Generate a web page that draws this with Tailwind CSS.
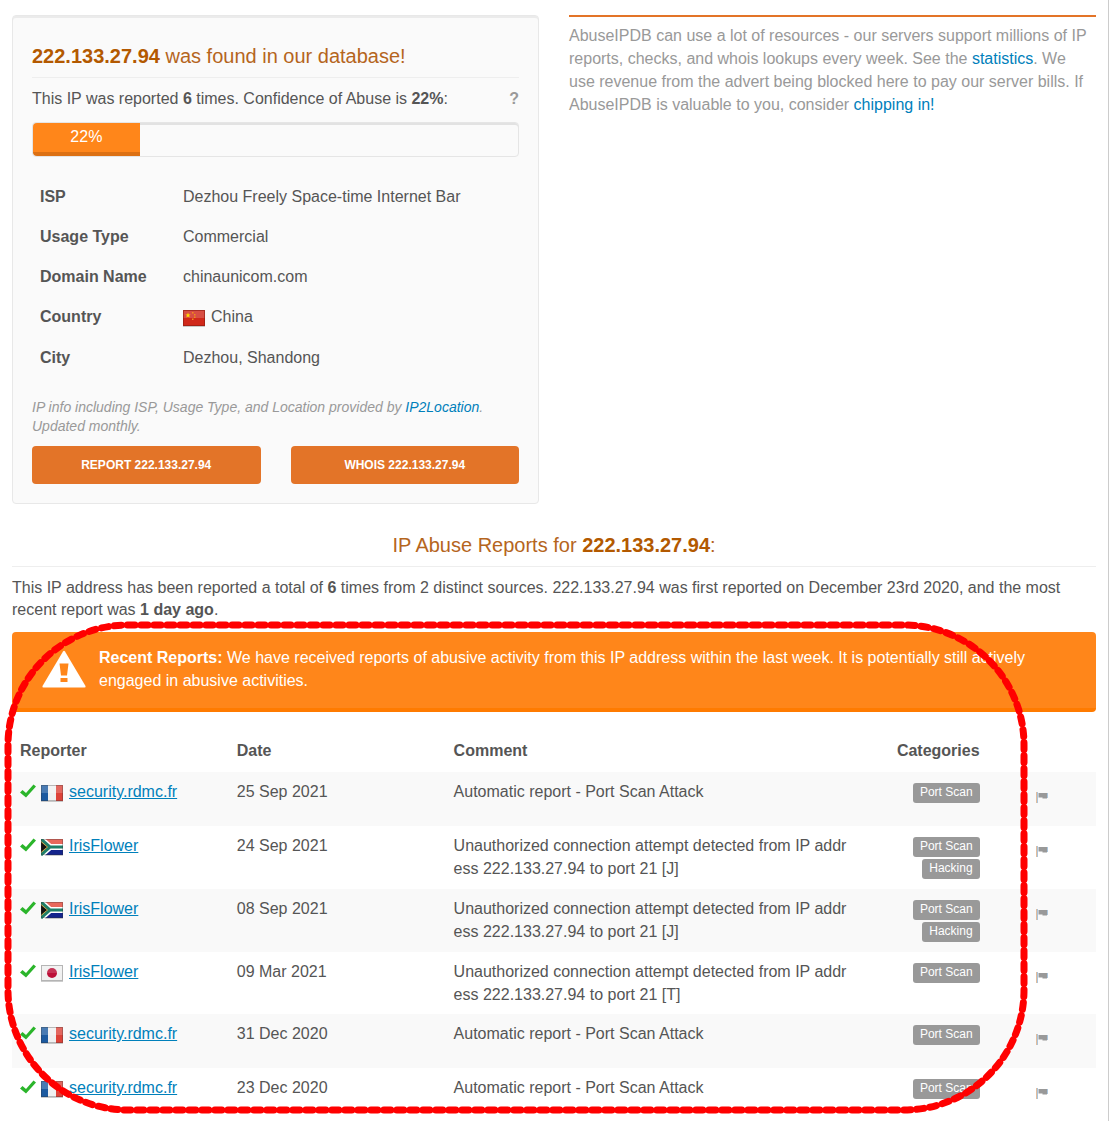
<!DOCTYPE html>
<html lang="en">
<head>
    <meta charset="utf-8">
    <meta name="viewport" content="width=device-width, initial-scale=1">
    <title>222.133.27.94 | AbuseIPDB</title>
    <script src="https://cdn.jsdelivr.net/npm/@tailwindcss/browser@4"></script>
</head>
<body class="bg-white font-['Liberation_Sans',Arial,sans-serif] text-base text-[#555] overflow-hidden">

    <!-- Icons -->
    <svg class="hidden">
        <defs>
            <linearGradient id="shine" x1="0" y1="0" x2="0" y2="1">
                <stop offset="0" stop-color="#fff" stop-opacity=".35"/>
                <stop offset=".5" stop-color="#fff" stop-opacity=".12"/>
                <stop offset="1" stop-color="#000" stop-opacity=".08"/>
            </linearGradient>
        </defs>
        <symbol id="flag-cn" viewBox="0 0 22 17">
            <rect y="1" width="22" height="16" fill="#000" opacity=".2"/>
            <rect width="22" height="16" fill="#d0281a"/>
            <path d="M0 0h22v8H0z" fill="#fff" opacity=".18"/>
            <path d="M5 2.400l.7 2h2L6.100 5.600l.6 2L5 6.400 3.300 7.600l.6-2L2.300 4.400h2z" fill="#ffde00"/>
            <path d="M9 2h1.500v1.500H9zM11 4h1.500v1.500H11zM11 6.500h1.500V8H11zM9 8.500h1.500V10H9z" fill="#f0901c"/>
            <rect x=".5" y=".5" width="21" height="15" fill="none" stroke="#8a1a10" stroke-opacity=".6"/>
        </symbol>
        <symbol id="flag-fr" viewBox="0 0 22 17">
            <rect y="1" width="22" height="16" fill="#000" opacity=".2"/>
            <rect width="7" height="16" fill="#1c5aa0"/>
            <rect x="7" width="8" height="16" fill="#f0f0f0"/>
            <rect x="15" width="7" height="16" fill="#dd4238"/>
            <path d="M0 0h22v8H0z" fill="#fff" opacity=".2"/>
            <rect x=".5" y=".5" width="21" height="15" fill="none" stroke="#333" stroke-opacity=".3"/>
        </symbol>
        <symbol id="flag-za" viewBox="0 0 22 17">
            <rect y="1" width="22" height="16" fill="#000" opacity=".2"/>
            <rect width="22" height="8" fill="#e8685c"/>
            <rect y="8" width="22" height="8" fill="#14248c"/>
            <path d="M0 0l9 8-9 8M9 8h13" fill="none" stroke="#fff" stroke-width="6"/>
            <path d="M0 2l7 6-7 6z" fill="#111"/>
            <path d="M0 2l7 6-7 6" fill="none" stroke="#f0b84a" stroke-width="1.500"/>
            <path d="M0 0l9 8-9 8M9 8h13" fill="none" stroke="#1f7f68" stroke-width="3"/>
            <rect x=".5" y=".5" width="21" height="15" fill="none" stroke="#333" stroke-opacity=".3"/>
        </symbol>
        <symbol id="flag-jp" viewBox="0 0 22 17">
            <rect y="1" width="22" height="16" fill="#000" opacity=".2"/>
            <rect width="22" height="16" fill="#f0f0f0"/>
            <circle cx="11" cy="8" r="5" fill="#bc1038"/>
            <path d="M0 0h22v8H0z" fill="#fff" opacity=".15"/>
            <rect x=".5" y=".5" width="21" height="15" fill="none" stroke="#777" stroke-opacity=".5"/>
        </symbol>
        <symbol id="check" viewBox="0 0 16 14">
            <path d="M0 8.500L2.500 6 6 9 13.500.500 16 2.500 6 13.500z" fill="#2bb52b"/>
        </symbol>
        <symbol id="report-flag" viewBox="0 0 12 12">
            <path d="M0 1h1v11H0z" fill="#e3bd9c"/>
            <path d="M1 1h1v11H1z" fill="#a9c4dc"/>
            <path d="M2.500 2h8.500v5.500H6.500V6.500h-4z" fill="#999"/>
            <path d="M11 2h1v5h-1z" fill="#a9c4dc"/>
        </symbol>
    </svg>

    <div class="mr-px border-r border-[#ccc] min-h-screen px-3 pt-[15px]">

        <div class="grid grid-cols-2 gap-x-[30px] items-start">
            <div class="border border-[#e8e8e8] rounded bg-[#fafafa] shadow-[inset_0_2px_0_#ebebeb] px-[19px] pt-7 pb-[19px]">
                <h3 class="text-xl leading-6 text-[#b5651d] border-b border-[#eee] pb-[9px]"><b class="text-[#b35900]">222.133.27.94</b> was found in our database!</h3>
                <p class="flex justify-between leading-6 mt-[9px]">
                    <span>This IP was reported <b>6</b> times. Confidence of Abuse is <b>22%</b>:</span>
                    <b class="text-[#999]">?</b>
                </p>
                <div class="mt-[11px] h-[35px] border border-[#e5e5e5] rounded shadow-[inset_0_2px_0_#e2e2e2]">
                    <div class="h-full rounded-l-sm bg-[#ff861a] border-b-4 border-[#dc7013] text-white text-center leading-7" style="width: 22%">22%</div>
                </div>

                <table class="mt-5 w-full text-left">
                    <tr class="h-10"><th class="w-[143px] px-2">ISP</th><td class="px-2">Dezhou Freely Space-time Internet Bar</td></tr>
                    <tr class="h-10"><th class="px-2">Usage Type</th><td class="px-2">Commercial</td></tr>
                    <tr class="h-10"><th class="px-2">Domain Name</th><td class="px-2">chinaunicom.com</td></tr>
                    <tr class="h-10">
                        <th class="px-2">Country</th>
                        <td class="px-2">
                            <div class="flex items-center gap-[6px]"><svg class="w-[22px] h-[17px] mt-[2px]"><use href="#flag-cn"/></svg>China</div>
                        </td>
                    </tr>
                    <tr class="h-[41px]"><th class="px-2">City</th><td class="px-2">Dezhou, Shandong</td></tr>
                </table>

                <p class="mt-5 text-sm leading-[19px] italic text-[#999]">IP info including ISP, Usage Type, and Location provided by <a href="#" class="text-[#0080bb]">IP2Location</a>.<br>Updated monthly.</p>

                <div class="mt-[10px] grid grid-cols-2 gap-[30px]">
                    <button class="h-[38px] rounded bg-[#e37428] text-white text-xs font-bold uppercase">Report 222.133.27.94</button>
                    <button class="h-[38px] rounded bg-[#e37428] text-white text-xs font-bold uppercase">Whois 222.133.27.94</button>
                </div>
            </div>

            <p class="border-t-2 border-[#e37428] pt-[7px] leading-[23px] text-[#999]">
                AbuseIPDB can use a lot of resources - our servers support millions of IP reports, checks, and whois lookups every week. See the <a href="#" class="text-[#0080bb]">statistics</a>. We use revenue from the advert being blocked here to pay our server bills. If AbuseIPDB is valuable to you, consider <a href="#" class="text-[#0080bb]">chipping in!</a>
            </p>
        </div>

        <h3 class="mt-[29px] text-xl leading-6 text-center text-[#b5651d] border-b border-[#eee] pb-[9px]">IP Abuse Reports for <b class="text-[#b35900]">222.133.27.94</b>:</h3>
        <p class="mt-[10px] leading-[22px]">This IP address has been reported a total of <b>6</b> times from 2 distinct sources. 222.133.27.94 was first reported on December 23rd 2020, and the most recent report was <b>1 day ago</b>.</p>

        <div class="relative mt-[11px]">
            <div class="flex h-20 rounded bg-[#ff861a] border-b-4 border-[#ff7b00] pt-[14px] px-[30px] text-white">
                <svg class="shrink-0 w-11 h-[38px] mt-1 mr-[13px]" viewBox="0 0 44 38">
                    <path d="M21 1.500Q22 0 23 1.500L43.500 36q.5 1.500-1 1.500h-41q-1.500 0-1-1.500z" fill="#fff"/>
                    <path d="M17.500 13.500h9l-1.500 12h-6zM18.500 28h7v4h-7z" fill="#ff861a"/>
                </svg>
                <p class="leading-[23px]"><b>Recent Reports:</b> We have received reports of abusive activity from this IP address within the last week. It is potentially still actively engaged in abusive activities.</p>
            </div>

            <table class="mt-4 w-full table-fixed text-left">
                <thead>
                    <tr class="h-11">
                        <th class="w-1/5 px-2 pt-[2px]">Reporter</th>
                        <th class="w-1/5 px-2 pt-[2px]">Date</th>
                        <th class="w-2/5 px-2 pt-[2px]">Comment</th>
                        <th class="w-1/10 px-2 pt-[2px] text-right">Categories</th>
                        <th class="w-1/10"></th>
                    </tr>
                </thead>
                <tbody class="align-top leading-[23px]">
                    <tr class="h-[54px] bg-[#f9f9f9]">
                        <td class="px-2 pt-2"><div class="flex"><svg class="w-4 h-[14px] mt-1 mr-[5px]"><use href="#check"/></svg><svg class="w-[22px] h-[17px] mt-[5px] mr-[6px]"><use href="#flag-fr"/></svg><a href="#" class="text-[#0080bb] underline">security.rdmc.fr</a></div></td>
                        <td class="px-2 pt-2">25 Sep 2021</td>
                        <td class="pl-2 pr-8 pt-2 break-all">Automatic report - Port Scan Attack</td>
                        <td class="px-2 pt-[11px]"><div class="flex flex-col items-end gap-[2px]"><span class="h-5 rounded-[3px] bg-[#999] px-[7px] text-xs leading-[18px] text-white">Port Scan</span></div></td>
                        <td class="pt-[19px]"><button aria-label="Report" class="block mx-auto"><svg class="w-3 h-3"><use href="#report-flag"/></svg></button></td>
                    </tr>
                    <tr class="h-[63px]">
                        <td class="px-2 pt-2"><div class="flex"><svg class="w-4 h-[14px] mt-1 mr-[5px]"><use href="#check"/></svg><svg class="w-[22px] h-[17px] mt-[5px] mr-[6px]"><use href="#flag-za"/></svg><a href="#" class="text-[#0080bb] underline">IrisFlower</a></div></td>
                        <td class="px-2 pt-2">24 Sep 2021</td>
                        <td class="pl-2 pr-8 pt-2 break-all">Unauthorized connection attempt detected from IP address 222.133.27.94 to port 21 [J]</td>
                        <td class="px-2 pt-[11px]"><div class="flex flex-col items-end gap-[2px]"><span class="h-5 rounded-[3px] bg-[#999] px-[7px] text-xs leading-[18px] text-white">Port Scan</span><span class="h-5 rounded-[3px] bg-[#999] px-[7px] text-xs leading-[18px] text-white">Hacking</span></div></td>
                        <td class="pt-[19px]"><button aria-label="Report" class="block mx-auto"><svg class="w-3 h-3"><use href="#report-flag"/></svg></button></td>
                    </tr>
                    <tr class="h-[63px] bg-[#f9f9f9]">
                        <td class="px-2 pt-2"><div class="flex"><svg class="w-4 h-[14px] mt-1 mr-[5px]"><use href="#check"/></svg><svg class="w-[22px] h-[17px] mt-[5px] mr-[6px]"><use href="#flag-za"/></svg><a href="#" class="text-[#0080bb] underline">IrisFlower</a></div></td>
                        <td class="px-2 pt-2">08 Sep 2021</td>
                        <td class="pl-2 pr-8 pt-2 break-all">Unauthorized connection attempt detected from IP address 222.133.27.94 to port 21 [J]</td>
                        <td class="px-2 pt-[11px]"><div class="flex flex-col items-end gap-[2px]"><span class="h-5 rounded-[3px] bg-[#999] px-[7px] text-xs leading-[18px] text-white">Port Scan</span><span class="h-5 rounded-[3px] bg-[#999] px-[7px] text-xs leading-[18px] text-white">Hacking</span></div></td>
                        <td class="pt-[19px]"><button aria-label="Report" class="block mx-auto"><svg class="w-3 h-3"><use href="#report-flag"/></svg></button></td>
                    </tr>
                    <tr class="h-[62px]">
                        <td class="px-2 pt-2"><div class="flex"><svg class="w-4 h-[14px] mt-1 mr-[5px]"><use href="#check"/></svg><svg class="w-[22px] h-[17px] mt-[5px] mr-[6px]"><use href="#flag-jp"/></svg><a href="#" class="text-[#0080bb] underline">IrisFlower</a></div></td>
                        <td class="px-2 pt-2">09 Mar 2021</td>
                        <td class="pl-2 pr-8 pt-2 break-all">Unauthorized connection attempt detected from IP address 222.133.27.94 to port 21 [T]</td>
                        <td class="px-2 pt-[11px]"><div class="flex flex-col items-end gap-[2px]"><span class="h-5 rounded-[3px] bg-[#999] px-[7px] text-xs leading-[18px] text-white">Port Scan</span></div></td>
                        <td class="pt-[19px]"><button aria-label="Report" class="block mx-auto"><svg class="w-3 h-3"><use href="#report-flag"/></svg></button></td>
                    </tr>
                    <tr class="h-[54px] bg-[#f9f9f9]">
                        <td class="px-2 pt-2"><div class="flex"><svg class="w-4 h-[14px] mt-1 mr-[5px]"><use href="#check"/></svg><svg class="w-[22px] h-[17px] mt-[5px] mr-[6px]"><use href="#flag-fr"/></svg><a href="#" class="text-[#0080bb] underline">security.rdmc.fr</a></div></td>
                        <td class="px-2 pt-2">31 Dec 2020</td>
                        <td class="pl-2 pr-8 pt-2 break-all">Automatic report - Port Scan Attack</td>
                        <td class="px-2 pt-[11px]"><div class="flex flex-col items-end gap-[2px]"><span class="h-5 rounded-[3px] bg-[#999] px-[7px] text-xs leading-[18px] text-white">Port Scan</span></div></td>
                        <td class="pt-[19px]"><button aria-label="Report" class="block mx-auto"><svg class="w-3 h-3"><use href="#report-flag"/></svg></button></td>
                    </tr>
                    <tr class="h-[54px]">
                        <td class="px-2 pt-2"><div class="flex"><svg class="w-4 h-[14px] mt-1 mr-[5px]"><use href="#check"/></svg><svg class="w-[22px] h-[17px] mt-[5px] mr-[6px]"><use href="#flag-fr"/></svg><a href="#" class="text-[#0080bb] underline">security.rdmc.fr</a></div></td>
                        <td class="px-2 pt-2">23 Dec 2020</td>
                        <td class="pl-2 pr-8 pt-2 break-all">Automatic report - Port Scan Attack</td>
                        <td class="px-2 pt-[11px]"><div class="flex flex-col items-end gap-[2px]"><span class="h-5 rounded-[3px] bg-[#999] px-[7px] text-xs leading-[18px] text-white">Port Scan</span></div></td>
                        <td class="pt-[19px]"><button aria-label="Report" class="block mx-auto"><svg class="w-3 h-3"><use href="#report-flag"/></svg></button></td>
                    </tr>
                </tbody>
            </table>

            <!-- Red marker around the reports -->
            <svg class="absolute -left-1 -top-[7px] w-[calc(100%-68px)] h-[calc(100%-5px)] overflow-visible pointer-events-none">
                <rect width="100%" height="100%" rx="120" fill="none" stroke="#f00" stroke-width="7" stroke-linecap="round" stroke-dasharray="7 6"/>
            </svg>
        </div>
    </div>
</body>
</html>
